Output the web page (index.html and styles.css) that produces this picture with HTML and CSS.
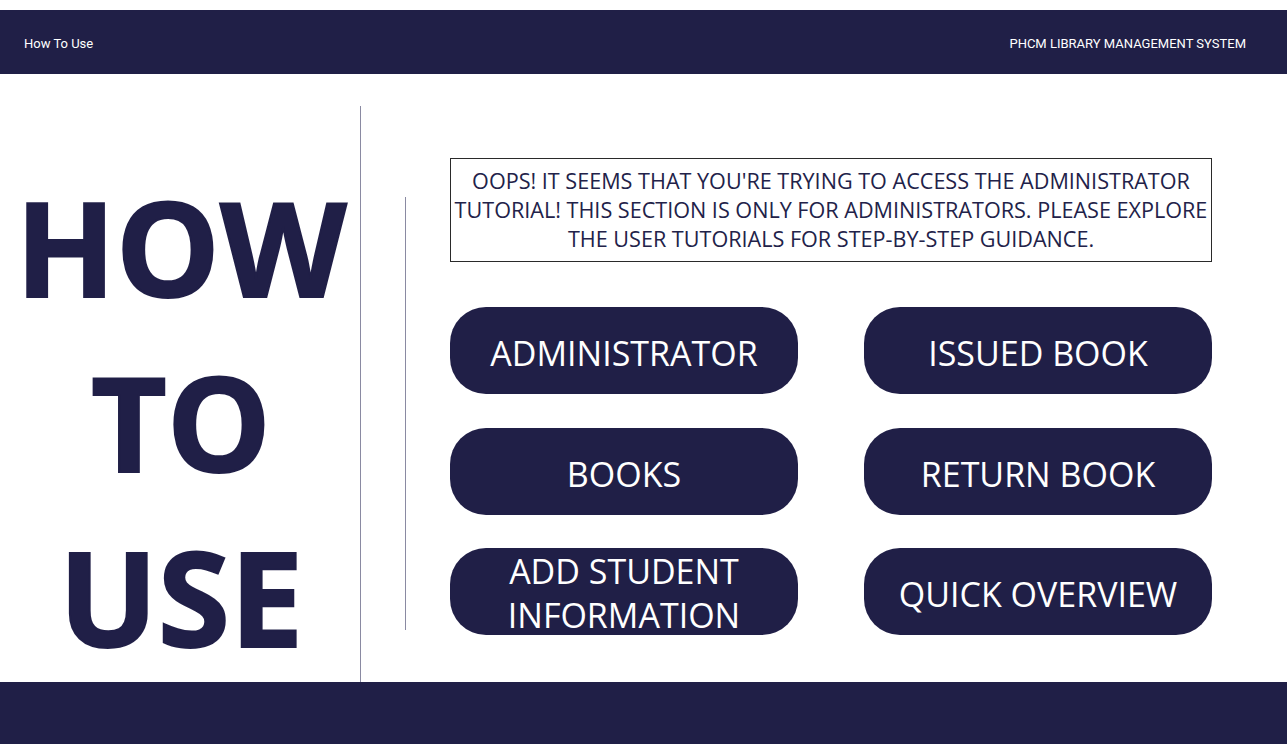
FILE: index.html
```html
<!DOCTYPE html>
<html lang="en">
<head>
<meta charset="utf-8">
<title>How To Use</title>
<link rel="stylesheet" href="styles.css">
</head>
<body>
<header class="nav">
  <span class="nav-title">How To Use</span>
  <span class="nav-brand">PHCM LIBRARY MANAGEMENT SYSTEM</span>
</header>
<main class="main">
  <section class="left">
    <div class="big">HOW</div>
    <div class="big">TO</div>
    <div class="big">USE</div>
  </section>
  <div class="divider"></div>
  <section class="content">
    <div class="notice">OOPS! IT SEEMS THAT YOU'RE TRYING TO ACCESS THE ADMINISTRATOR<br>TUTORIAL! THIS SECTION IS ONLY FOR ADMINISTRATORS. PLEASE EXPLORE<br>THE USER TUTORIALS FOR STEP-BY-STEP GUIDANCE.</div>
    <div class="grid">
      <a class="btn">ADMINISTRATOR</a>
      <a class="btn">ISSUED BOOK</a>
      <a class="btn">BOOKS</a>
      <a class="btn">RETURN BOOK</a>
      <a class="btn two">ADD STUDENT<br>INFORMATION</a>
      <a class="btn">QUICK OVERVIEW</a>
    </div>
  </section>
</main>
<footer class="footer"></footer>
</body>
</html>
```
FILE: styles.css
```css
* { box-sizing: border-box; }
html, body { margin: 0; padding: 0; background: #ffffff; }
body { padding-top: 10px; width: 1287px; height: 744px; overflow: hidden; }

.nav {
  height: 64px;
  background: #201f47;
  display: flex;
  align-items: center;
  justify-content: space-between;
  padding: 3px 41px 0 24px;
  color: #ffffff;
  font-family: Roboto, "Liberation Sans", sans-serif;
  font-size: 13px;
}

.main {
  height: 608px;
  display: flex;
  padding-top: 32px;
}

.left {
  width: 361px;
  border-right: 1px solid #8a8aa2;
  display: flex;
  flex-direction: column;
  align-items: center;
  padding-top: 53px;
  padding-left: 2px;
}

.big {
  font-family: "Open Sans", "Liberation Sans", sans-serif;
  font-weight: 700;
  font-size: 131px;
  line-height: 175px;
  height: 175px;
  color: #201f47;
  -webkit-text-stroke: 2px #201f47;
  letter-spacing: 0;
}

.divider {
  width: 1px;
  background: #8a8aa2;
  margin-left: 44px;
  margin-top: 91px;
  height: 433px;
}

.content {
  margin-left: 44px;
  padding-top: 52px;
  display: flex;
  flex-direction: column;
}

.notice {
  width: 762px;
  height: 104px;
  border: 1px solid #2a2a2a;
  text-align: center;
  font-family: "Open Sans", sans-serif;
  font-size: 21.6px;
  line-height: 29px;
  color: #222249;
  padding-top: 7px;
}

.grid {
  margin-top: 45px;
  display: grid;
  grid-template-columns: 348px 348px;
  grid-auto-rows: 87px;
  column-gap: 66px;
  row-gap: 33.5px;
}

.btn {
  background: #201f47;
  border-radius: 36px;
  color: #ffffff;
  display: flex;
  align-items: center;
  justify-content: center;
  text-align: center;
  font-family: "Open Sans", sans-serif;
  font-size: 34px;
  line-height: 1.3;
  padding-top: 6px;
}

.btn.two { line-height: 44px; padding-top: 2px; }

.footer {
  height: 62px;
  background: #201f47;
}
```
